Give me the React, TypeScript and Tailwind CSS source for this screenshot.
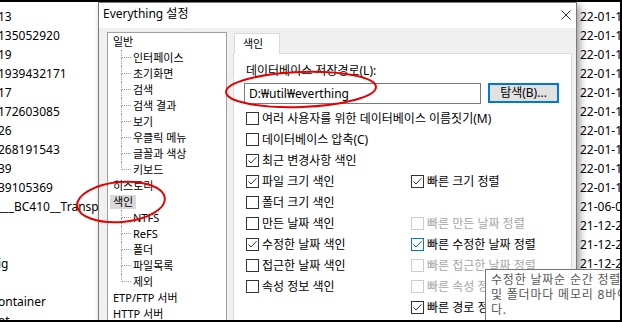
import React from "react";

const font = "font-['Noto_Sans','Noto_Sans_CJK_KR',sans-serif]";

const leftList = [
  "13", "135052920", "19", "1939432171", "17", "172603085", "26", "268191543",
  "39", "39105369", "___BC410__Transport", "", "", "ig", "", "ontainer", "ot",
];

const dates = [
  "22-01-18", "22-01-18", "22-01-18", "22-01-18", "22-01-18", "22-01-18", "22-01-18",
  "22-01-18", "22-01-18", "22-01-18", "21-06-03", "21-12-24", "21-12-24", "21-12-24",
  "21-12-24", "21-12-24", "21-12-24",
];

type Node = { label: string; selected?: boolean; children?: string[] };

const tree: Node[] = [
  { label: "일반", children: ["인터페이스", "초기화면", "검색", "검색 결과", "보기", "우클릭 메뉴", "글꼴과 색상", "키보드"] },
  { label: "히스토리" },
  { label: "색인", selected: true, children: ["NTFS", "ReFS", "폴더", "파일목록", "제외"] },
  { label: "ETP/FTP 서버" },
  { label: "HTTP 서버" },
];

function TreeChild({ label, last }: { label: string; last: boolean }) {
  return (
    <div className="flex h-[16px] items-stretch">
      <div className="w-[13px]" />
      <div className="flex w-[10px] flex-col">
        <div className="h-[8px] border-b border-l border-dotted border-[#a0a0a0]" />
        {!last && <div className="h-[8px] border-l border-dotted border-[#a0a0a0]" />}
      </div>
      <span className="ml-[2px] leading-[16px] whitespace-nowrap">{label}</span>
    </div>
  );
}

function CheckBox({
  label,
  checked = false,
  disabled = false,
  hot = false,
  className = "",
}: {
  label: string;
  checked?: boolean;
  disabled?: boolean;
  hot?: boolean;
  className?: string;
}) {
  const box = disabled ? "border-[#cccccc]" : hot ? "border-[#0078d7]" : "border-[#333333]";
  const mark = hot ? "#005499" : "#333333";
  return (
    <div className={`ml-[2px] flex items-center gap-[3px] ${className}`}>
      <span className={`flex h-[13px] w-[13px] shrink-0 items-center justify-center border bg-white ${box}`}>
        {checked && (
          <svg width="11" height="11" viewBox="0 0 11 11">
            <path d="M1.5 5.5 L4 8 L9.5 2.2" fill="none" stroke={mark} strokeWidth="1" />
          </svg>
        )}
      </span>
      <span className={`whitespace-nowrap text-[12px] leading-[21px] ${disabled ? "text-[#a6a6a6]" : "text-black"}`}>
        {label}
      </span>
    </div>
  );
}

export default function App() {
  return (
    <div className={`relative h-[322px] w-[622px] overflow-hidden border-t-2 border-r-2 border-b-2 border-black bg-white text-[12px] text-black ${font}`}>
      {/* list of the window behind */}
      <div className="flex justify-between pt-[5px]">
        <div className="-ml-[2px] w-[100px]">
          {leftList.map((t, i) => (
            <div key={i} className="h-[19px] whitespace-nowrap leading-[19px]">{t}</div>
          ))}
        </div>
        <div className="w-[40px]">
          {dates.map((t, i) => (
            <div key={i} className="h-[19px] whitespace-nowrap leading-[19px]">{t}</div>
          ))}
        </div>
      </div>

      {/* settings dialog */}
      <div className="absolute left-[98px] top-0 h-[340px] w-[479px] border border-[#7a7a7a] bg-[#f0f0f0] shadow-[3px_3px_7px_rgba(0,0,0,0.4)]">
        <div className="flex h-[25px] justify-between bg-white pl-[4px] pr-[5px]">
          <span className="pt-[3px] text-[12px] leading-[16px]">Everything 설정</span>
          <svg className="mt-[7px]" width="10" height="10" viewBox="0 0 10 10">
            <path d="M0.5 0.5 L9.5 9.5 M9.5 0.5 L0.5 9.5" stroke="#333" strokeWidth="1" />
          </svg>
        </div>

        <div className="flex items-start pl-[8px] text-[11px]">
          {/* tree */}
          <div className="mt-[4px] h-[300px] w-[120px] border border-[#a0a0a0] bg-white pt-[1px]">
            {tree.map((n) => (
              <div key={n.label}>
                <div className="h-[16px] pl-[5px] leading-[16px] whitespace-nowrap">
                  {n.selected ? (
                    <span className="-ml-[3px] inline-block h-[14px] bg-[#d9d9d9] px-[3px] leading-[14px]">{n.label}</span>
                  ) : (
                    n.label
                  )}
                </div>
                {n.children?.map((c, i) => (
                  <TreeChild key={c} label={c} last={i === n.children!.length - 1} />
                ))}
              </div>
            ))}
          </div>

          {/* tab control */}
          <div className="ml-[6px] mt-[5px] w-[339px] text-[12px]">
            <div className="relative z-10 -mb-[1px] ml-[1px] h-[21px] w-[46px] border border-b-0 border-[#d9d9d9] bg-white pl-[8px] text-[11px] leading-[19px]">
              색인
            </div>
            <div className="h-[280px] border border-[#d9d9d9] bg-white px-[10px] pt-[8px]">
              <div className="ml-[2px] h-[17px] leading-[17px]">데이터베이스 저장경로(L):</div>
              <div className="mt-[4px] flex gap-[7px]">
                <div className="h-[21px] w-[237px] border border-[#7a7a7a] pl-[4px] leading-[19px]">
                  D:₩util₩everthing
                </div>
                <div className="flex h-[20px] w-[71px] items-center justify-center border-2 border-[#0078d7] bg-[#e1e1e1]">
                  탐색(B)...
                </div>
              </div>
              <div className="mt-[4px] grid auto-rows-[21px] grid-cols-[165px_1fr]">
                <CheckBox className="col-span-2" label="여러 사용자를 위한 데이터베이스 이름짓기(M)" />
                <CheckBox className="col-span-2" label="데이터베이스 압축(C)" />
                <CheckBox checked label="최근 변경사항 색인" />
                <div />
                <CheckBox checked label="파일 크기 색인" />
                <CheckBox checked label="빠른 크기 정렬" />
                <CheckBox label="폴더 크기 색인" />
                <div />
                <CheckBox label="만든 날짜 색인" />
                <CheckBox disabled label="빠른 만든 날짜 정렬" />
                <CheckBox checked label="수정한 날짜 색인" />
                <CheckBox checked hot label="빠른 수정한 날짜 정렬" />
                <CheckBox label="접근한 날짜 색인" />
                <CheckBox disabled label="빠른 접근한 날짜 정렬" />
                <CheckBox label="속성 정보 색인" />
                <CheckBox disabled label="빠른 속성 정렬" />
                <div />
                <CheckBox checked label="빠른 경로 정렬" />
              </div>
            </div>
          </div>
        </div>
      </div>

      {/* tooltip */}
      <div className="absolute left-[485px] top-[267px] h-[52px] w-[150px] border border-[#767676] bg-white px-[5px] pt-[2px] text-[12px] leading-[15px] tracking-[0.8px] text-[#575757] whitespace-nowrap">
        <div>수정한 날짜순 순간 정렬을 활성화합니다.</div>
        <div>및 폴더마다 메모리 8바이트를 사용합니</div>
        <div>다.</div>
      </div>

      {/* red annotation circles */}
      <svg className="pointer-events-none absolute left-0 top-0" width="622" height="322" viewBox="0 0 622 322">
        <ellipse cx="301" cy="87.5" rx="75" ry="17.5" transform="rotate(-2 301 87.5)" fill="none" stroke="#e60000" strokeWidth="2" />
        <ellipse cx="121" cy="200" rx="44" ry="20" transform="rotate(-5 121 200)" fill="none" stroke="#e60000" strokeWidth="2" />
      </svg>
    </div>
  );
}
